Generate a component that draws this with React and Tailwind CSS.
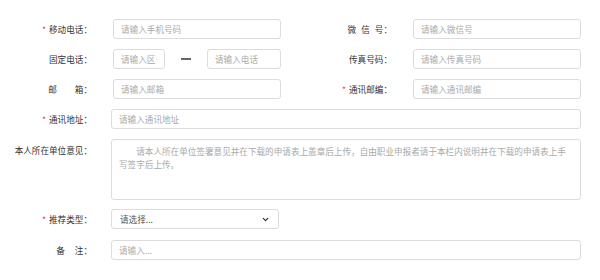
import { ChevronDown } from 'lucide-react';

const inputCls =
    'h-5 rounded-[3px] border border-[#dcdcdc] bg-white px-[7px] text-[8.6px] text-[#333] placeholder:text-[#aaa] outline-none';

function Label({ required, children, className = '' }) {
    return (
        <div className={'w-[92px] shrink-0 text-right text-[8.6px] text-[#333] ' + className}>
            {required && <span className="mr-[3px] text-[#f04134]">*</span>}
            {children}
        </div>
    );
}

export default function App() {
    return (
        <div className="h-[280px] w-[600px] bg-white pt-[19px] font-['Noto_Sans_CJK_SC',sans-serif] leading-none">
            {/* --- two-column rows --- */}
            <div className="flex">
                <div className="flex w-[300px] items-center">
                    <Label required>移动电话：</Label>
                    <input className={inputCls + ' ml-[21px] w-[168px]'} placeholder="请输入手机号码" />
                </div>
                <div className="flex w-[300px] items-center">
                    <Label>
                        微<span className="ml-[5px]">信</span>
                        <span className="ml-[5px]">号</span>：
                    </Label>
                    <input className={inputCls + ' ml-[21px] w-[168px]'} placeholder="请输入微信号" />
                </div>
            </div>

            <div className="mt-[10px] flex">
                <div className="flex w-[300px] items-center">
                    <Label>固定电话：</Label>
                    <input className={inputCls + ' ml-[21px] w-[52px]'} placeholder="请输入区号" />
                    <div className="flex w-[42px] justify-center">
                        <div className="h-[2px] w-[10px] bg-[#666]" />
                    </div>
                    <input className={inputCls + ' w-[74px]'} placeholder="请输入电话" />
                </div>
                <div className="flex w-[300px] items-center">
                    <Label>传真号码：</Label>
                    <input className={inputCls + ' ml-[21px] w-[168px]'} placeholder="请输入传真号码" />
                </div>
            </div>

            <div className="mt-[10px] flex">
                <div className="flex w-[300px] items-center">
                    <Label>
                        邮<span className="ml-[18px]">箱</span>：
                    </Label>
                    <input className={inputCls + ' ml-[21px] w-[168px]'} placeholder="请输入邮箱" />
                </div>
                <div className="flex w-[300px] items-center">
                    <Label required>通讯邮编：</Label>
                    <input className={inputCls + ' ml-[21px] w-[168px]'} placeholder="请输入通讯邮编" />
                </div>
            </div>

            {/* --- full-width rows --- */}
            <div className="mt-[10px] flex items-center">
                <Label required>通讯地址：</Label>
                <input className={inputCls + ' ml-[19px] w-[470px]'} placeholder="请输入通讯地址" />
            </div>

            <div className="mt-[10px] flex items-start">
                <Label className="pt-[7px]">本人所在单位意见：</Label>
                <textarea
                    className="ml-[19px] h-[61px] w-[470px] resize-none rounded-[3px] border border-[#dcdcdc] bg-white px-[7px] py-[5px] indent-[2em] text-[8.6px] leading-[13px] text-[#333] placeholder:text-[#aaa] outline-none"
                    placeholder="请本人所在单位签署意见并在下载的申请表上盖章后上传，自由职业申报者请于本栏内说明并在下载的申请表上手写签字后上传。"
                />
            </div>

            <div className="mt-[9px] flex items-center">
                <Label required>推荐类型：</Label>
                <div className="ml-[19px] flex h-5 w-[168px] items-center justify-between rounded-[3px] border border-[#dcdcdc] bg-white pl-[8px] pr-[8px] text-[8.6px] text-[#555]">
                    <span>请选择...</span>
                    <ChevronDown size={9} strokeWidth={3.5} className="text-[#333]" />
                </div>
            </div>

            <div className="mt-[11px] flex items-center">
                <Label>
                    备<span className="ml-[10px]">注</span>：
                </Label>
                <input className={inputCls + ' ml-[19px] w-[470px]'} placeholder="请输入..." />
            </div>
        </div>
    );
}
